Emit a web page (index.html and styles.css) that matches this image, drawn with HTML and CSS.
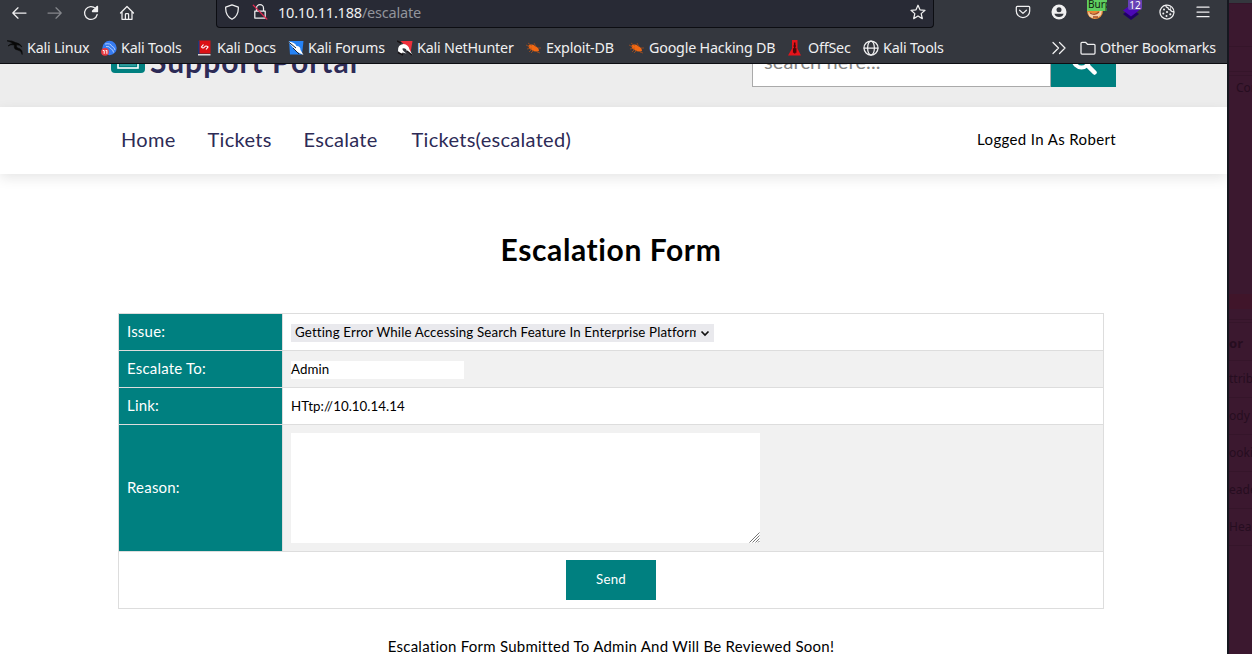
FILE: index.html
```html
<!DOCTYPE html>
<html lang="en">
<head>
<meta charset="utf-8">
<title>Support Portal</title>
<link rel="stylesheet" href="styles.css">
</head>
<body>
<div class="screen">
<div class="window">
  <div class="chrome">
    <div class="toolbar">
      <div class="nav-buttons">
        <svg class="ic" viewBox="0 0 16 16"><path d="M15 8H2M7 2.8 1.8 8 7 13.2"/></svg>
        <svg class="ic dim" viewBox="0 0 16 16"><path d="M1 8h13M9 2.8 14.2 8 9 13.2"/></svg>
        <svg class="ic" viewBox="0 0 16 16"><path d="M14.2 9.5A6.4 6.4 0 1 1 12.5 3.500M14.3 1.5v4.8H9.5z"/><path class="solid" d="M14.5 1.5v5h-5z"/></svg>
        <svg class="ic" viewBox="0 0 16 16"><path d="M1.5 8 8 1.5 14.5 8M3 7v7.3h10V7M6.4 14.3V9.4q0-.8.8-.8h1.6q.8 0 .8.8v4.9"/></svg>
      </div>
      <div class="urlbar">
        <svg class="ic" viewBox="0 0 16 16"><path d="M8 .9 14.3 3.2C14.6 9 12.4 13 8 15.3 3.6 13 1.4 9 1.7 3.2z"/></svg>
        <svg class="ic lock" viewBox="0 0 16 16"><path d="M4.5 7V4.2a3.5 3.5 0 0 1 7 0V7M2.8 7.2h10.4v6.9H2.8z"/><path class="red" d="M1.3 1.2 14.8 15"/></svg>
        <div class="url">10.10.11.188<span class="path">/escalate</span></div>
        <svg class="ic" viewBox="0 0 16 16"><path d="m8 1.2 2 4.6 5 .5-3.8 3.3 1.1 5L8 12l-4.3 2.6 1.1-5L1 6.3l5-.5z"/></svg>
      </div>
      <div class="tools">
        <svg class="ic" viewBox="0 0 16 16"><path d="M2.3 2.4h11.4q1 0 1 1v3.5a6.7 6.7 0 0 1-13.4 0V3.4q0-1 1-1zM4.6 6.2 8 9.4l3.4-3.2"/></svg>
        <svg class="ic" viewBox="0 0 16 16"><circle class="disc" cx="8" cy="8" r="7.5"/><circle class="hole" cx="8" cy="5.7" r="2.5"/><path class="hole" d="M3.4 9.7h9.2Q11.6 13 8 13T3.4 9.7z"/></svg>
        <div class="ext">
          <svg viewBox="0 0 18 18"><circle cx="9" cy="9" r="8" fill="#e98a35"/><path d="M2 10q7 4 14-2l-1 5q-6 6-12 1z" fill="#f3cfaa"/><path d="M4 11q5 3 9-1M7 15h5" stroke="#a44b24" stroke-width="1.3" fill="none"/></svg>
          <span class="badge burp">Burp</span>
        </div>
        <div class="ext">
          <svg viewBox="0 0 18 18"><path d="m1 12 8-6 8 6-8 6z" fill="#210066"/><path d="m1 8.5 8-6 8 6-8 6z" fill="#4b08b5"/></svg>
          <span class="badge count">12</span>
        </div>
        <svg class="ic" viewBox="0 0 16 16"><path d="M7 1.100A7 7 0 1 0 14.900 9M7 1.100A7 7 0 0 1 14.900 9M7 1.100q-.4 2.400 2 2.600.2 2.200 2.400 2 .5 2.300 3.500 2.300"/><g class="disc"><circle cx="5" cy="5.400" r="1"/><circle cx="8" cy="8" r="1.100"/><circle cx="4.300" cy="9.400" r="1"/><circle cx="7.500" cy="12" r="1"/><circle cx="11.300" cy="10.300" r="1.100"/><circle cx="11.500" cy="4" r=".7"/></g></svg>
        <svg class="ic" viewBox="0 0 16 16"><path d="M2 3.2h12M2 8h12M2 12.7h12"/></svg>
      </div>
    </div>
    <div class="bookmarks">
      <div class="bm"><svg viewBox="0 0 16 16"><path d="M0 .8q5-.6 8.500 1.700Q13 3 15 7q-2.500-2.500-5.500-2.200-.8 2.800 2 3.500 4.200.8 3.700 6.200-.9-4.200-4.500-4.500-4.500-.7-3.200-5Q4 4 1 6q2-2.500 5-2.500Q3 1.500 0 .8z" fill="#080808" stroke="#080808" stroke-width=".6"/></svg><span>Kali Linux</span></div>
      <div class="bm"><svg viewBox="0 0 16 16"><circle cx="8.500" cy="8" r="7.200" fill="#367bf0"/><path d="M4 4q6-1 6.500 2 3 1 3.500 4M5 6.500q4-.5 4.500 2 3 1 3 4" stroke="#bcd5ff" stroke-width=".9" fill="none"/><circle cx="4" cy="11.800" r="3.900" fill="#e83a42"/><path d="M1.800 10.500h1.400v3.300M5.900 10.300v3.500M4.600 10.600h1.300" stroke="#fff" fill="none"/></svg><span>Kali Tools</span></div>
      <div class="bm"><svg viewBox="0 0 16 16"><path d="M2 .5h11.500v13H2z" fill="#dc1114"/><path d="M1 1h1.500v13H1z" fill="#1d3978"/><path d="M1 14h12.500v1.500H1z" fill="#d8d8d8"/><path d="M6.500 4.500 4.500 7q1.500 2 3 0t3.500 0L9 9.500" stroke="#fff" stroke-width="1.200" fill="none"/></svg><span>Kali Docs</span></div>
      <div class="bm"><svg viewBox="0 0 16 16"><path d="M1 1h14.500L14 14.500H2z" fill="#2683f5"/><path d="M0 1.500q7 .5 8.500 4.500 4 0 4 4l3 5-7-3.500L4.500 7z" fill="#fff"/><path d="M0 1.500 8 8M5 8l6 6" stroke="#182435" fill="none"/></svg><span>Kali Forums</span></div>
      <div class="bm"><svg viewBox="0 0 16 16"><path d="M3.500 1h12l-2 12-4-6z" fill="#ee303b"/><path d="M1 11Q.5 4.500 6.500 4q5 .5 6 5.500l3 5.500-5.500-3.500q-1-4-4.500-3-.5 2 4 5l-4-1-1.500 2z" fill="#fff"/><path d="M0 1 4 3M1 12.500l5 2.500M10 11l5 4" stroke="#171214" stroke-width="1.400" fill="none"/></svg><span>Kali NetHunter</span></div>
      <div class="bm"><svg viewBox="0 0 16 16"><path d="M2.500 5.500q3.500-2 6.500.5 4 1.500 4 5-4 1.500-7.500-1-3-1.500-3-4.500z" fill="#f26812"/><path d="m0 5 4 2M1 9l5-1M5 13l3-3M8 3l2 4M11 12l3 1M12 8h3M2 3l4 3M3 12l3-3" stroke="#b65118" stroke-width=".7" fill="none"/></svg><span>Exploit-DB</span></div>
      <div class="bm"><svg viewBox="0 0 16 16"><path d="M2.500 5.500q3.500-2 6.500.5 4 1.500 4 5-4 1.500-7.500-1-3-1.500-3-4.500z" fill="#f26812"/><path d="m0 5 4 2M1 9l5-1M5 13l3-3M8 3l2 4M11 12l3 1M12 8h3M2 3l4 3M3 12l3-3" stroke="#b65118" stroke-width=".7" fill="none"/></svg><span>Google Hacking DB</span></div>
      <div class="bm"><svg viewBox="0 0 16 16"><path d="M4 0h5.500v8.500l3.500 7H0l4-7z" fill="#e5141b"/><path d="M6.700 2.500v11M5.500 6h2.400M5.700 9h2v3h-2z" stroke="#4d0508" stroke-width="1.500"/></svg><span>OffSec</span></div>
      <div class="bm"><svg class="ic" viewBox="0 0 16 16"><circle cx="8" cy="8" r="7"/><ellipse cx="8" cy="8" rx="3.400" ry="7"/><path d="M1 8h14"/></svg><span>Kali Tools</span></div>
      <div class="more"><svg class="ic" viewBox="0 0 16 16"><path d="m2 2.500 5.500 5.500L2 13.500M8.500 2.500 14 8l-5.500 5.500"/></svg></div>
      <div class="bm"><svg class="ic" viewBox="0 0 16 16"><path d="M1 13V3.300q0-1 1-1h3.500l2 2H14q1 0 1 1V13q0 1-1 1H2q-1 0-1-1z"/></svg><span>Other Bookmarks</span></div>
    </div>
  </div>
  <div class="page">
    <header class="masthead">
      <div class="brand"><svg viewBox="0 0 34 28"><rect width="34" height="28" rx="4" fill="#008080"/><rect x="7" y="5" width="20" height="18" fill="none" stroke="#fff" stroke-width="1.600"/><path d="M9 20h16" stroke="#2c9999" stroke-width="2"/></svg><span>Support Portal</span></div>
      <div class="search"><div class="field">search here...</div><div class="go"><svg viewBox="0 0 26 26"><circle cx="10.500" cy="10.500" r="8" fill="none" stroke="#fff" stroke-width="4"/><path d="m16.500 16.500 7 7" stroke="#fff" stroke-width="4.500" stroke-linecap="round"/></svg></div></div>
    </header>
    <nav class="menu">
      <a class="m1">Home</a><a class="m2">Tickets</a><a class="m3">Escalate</a><a class="m4">Tickets(escalated)</a>
      <span class="user">Logged In As Robert</span>
    </nav>
    <main>
      <h1>Escalation Form</h1>
      <div class="form">
        <div class="row"><div class="label">Issue:</div><div class="cell"><div class="select"><span>Getting Error While Accessing Search Feature In Enterprise Platform</span><svg viewBox="0 0 10 10"><path d="m1.500 3.500 3.500 3.500 3.500-3.500" fill="none" stroke="#111" stroke-width="1.700"/></svg></div></div></div>
        <div class="row alt"><div class="label">Escalate To:</div><div class="cell"><div class="input">Admin</div></div></div>
        <div class="row"><div class="label">Link:</div><div class="cell"><div class="input">HTtp://10.10.14.14</div></div></div>
        <div class="row alt tall"><div class="label">Reason:</div><div class="cell"><div class="area"><svg viewBox="0 0 11 11"><path d="M.500 10.500l10-10M3.500 10.500l7-7M6.500 10.500l4-4M9 10.500l1.500-1.500" stroke="#777" fill="none"/></svg></div></div></div>
        <div class="row send"><div class="button">Send</div></div>
      </div>
      <p class="notice">Escalation Form Submitted To Admin And Will Be Reviewed Soon!</p>
    </main>
  </div>
</div>
<aside class="behind">
  <div class="strip top"></div><div class="strip s1"></div><div class="strip s2"></div><div class="strip s3"></div><div class="strip console">Con</div><div class="strip hot"></div>
  <div class="strip s4"></div><div class="strip s5"></div><div class="strip head">or</div><div class="strip item">ttribu</div><div class="strip item">ody P</div><div class="strip item">ookie</div><div class="strip item">eade</div><div class="strip item">Head</div>
</aside>
</div>
</body>
</html>
```
FILE: styles.css
```css
* { box-sizing: border-box; }
body { margin: 0; background: #3b182f; }
.screen { display: flex; width: 1252px; height: 654px; overflow: hidden; }
.window { width: 1229px; flex: none; border-right: 2px solid #15171f; background: #fff; display: flex; flex-direction: column; overflow: hidden; }
.chrome { height: 64px; flex: none; background: #34373e; border-bottom: 1px solid #0c0d12; font-family: "Noto Sans", sans-serif; color: #f0f0f1; }
.toolbar { height: 28px; display: flex; overflow: hidden; }
.ic { width: 16px; height: 16px; flex: none; fill: none; stroke: #f0f0f1; stroke-width: 1.25; stroke-linejoin: round; stroke-linecap: round; }
.dim { stroke: #85878c; }
.solid, .disc { fill: #f0f0f1; }
.disc { stroke: none; }
.hole { fill: #34373e; stroke: none; }
.red { stroke: #e22850; }
.nav-buttons { width: 216px; display: flex; gap: 20px; padding: 5px 0 0 11px; }
.urlbar { width: 718px; height: 28px; display: flex; padding: 4px 7px 0; background: #282a35; border: 1px solid #0c0d12; border-top: 0; border-radius: 0 0 4px 4px; }
.lock { margin-left: 12px; }
.url { flex: 1; margin-left: 10px; font-size: 14.5px; letter-spacing: -.2px; line-height: 17px; white-space: nowrap; }
.path { color: #92949b; }
.tools { display: flex; gap: 20px; padding: 4px 0 0 81px; }
.ext { position: relative; width: 16px; height: 16px; }
.ext svg { display: block; width: 18px; height: 18px; margin: -2px 0 0 -1px; }
.badge { position: absolute; overflow: hidden; font-size: 10px; line-height: 12px; height: 13px; white-space: nowrap; }
.burp { left: -4px; margin-left: 4px; top: -6px; width: 20px; padding: 0 1px; background: #5fce60; color: #102010; }
.count { left: 5px; top: -5px; width: 14px; text-align: center; background: #6742b5; color: #fff; border-radius: 2px; height: 11px; }
.bookmarks { height: 35px; display: grid; grid-template-columns: 94px 96px 91px 109px 129px 103px 159px 75px 188px 29px 140px; align-items: center; padding: 5px 0 0 7px; font-size: 14.3px; letter-spacing: -.2px; line-height: 18px; }
.bm { display: flex; align-items: center; gap: 4px; white-space: nowrap; }
.bm svg { width: 16px; height: 16px; flex: none; }
.more { display: flex; }
.page { flex: 1; min-height: 0; overflow: hidden; display: flex; flex-direction: column; font-family: Lato, sans-serif; font-variant-ligatures: none; color: #000; }
.masthead { height: 43px; flex: none; background: #ededed; overflow: hidden; display: flex; justify-content: space-between; align-items: flex-end; padding: 0 111px 20px; }
.brand { display: flex; align-items: flex-end; gap: 5px; height: 48px; padding-bottom: 14px; color: #2d2b56; font-size: 30px; font-weight: 700; line-height: 34px; }
.brand svg { width: 34px; height: 28px; }
.brand span { margin-bottom: -5px; letter-spacing: 1px; }
.search { display: flex; height: 50px; width: 364px; }
.field { width: 299px; background: #fff; border: 1px solid #aaa; padding-left: 11px; font-size: 20px; line-height: 47px; color: #858585; letter-spacing: .1px; }
.go { width: 65px; background: #008080; display: flex; justify-content: center; align-items: center; }
.go svg { width: 26px; height: 26px; }
.menu { position: relative; height: 67px; flex: none; display: flex; align-items: center; padding: 0 111px 3px 121px; color: #2d2b56; font-size: 20px; background: #fff; box-shadow: 0 4px 12px rgba(0,0,0,.1); }
.m1 { width: 86.5px; } .m2 { width: 96px; } .m3 { width: 108px; }
.menu a { letter-spacing: .3px; }
.user { margin-left: auto; font-size: 15px; color: #000; letter-spacing: .36px; }
main { padding-left: 118px; width: 1104px; }
h1 { margin: 56px 0 45px; height: 38px; line-height: 38px; font-size: 30px; text-align: center; font-weight: 700; letter-spacing: .6px; }
.form { width: 986px; border: 1px solid #ddd; border-bottom: 0; }
.row { display: flex; height: 37px; border-bottom: 1px solid #ddd; }
.alt { background: #f1f1f1; }
.label { width: 164px; flex: none; background: #008080; border-right: 1px solid #ddd; color: #fff; font-size: 15px; display: flex; align-items: center; padding: 0 0 2px 8px; letter-spacing: .2px; }
.cell { padding: 8px; display: flex; align-items: center; }
.select { width: 423px; height: 18px; margin-top: 2px; background: #e9e9ed; display: flex; align-items: center; padding-left: 4px; font-size: 13.3px; }
.select span { width: 401px; overflow: hidden; white-space: nowrap; line-height: 16px; padding-bottom: 2px; letter-spacing: .15px; }
.select svg { width: 10px; height: 10px; margin-left: 4px; }
.input { width: 173px; height: 18px; margin-top: 1px; background: #fff; font-size: 13.3px; line-height: 16px; letter-spacing: .05px; }
.tall { height: 127px; }
.area { width: 469px; height: 110px; background: #fff; display: flex; align-items: flex-end; justify-content: flex-end; }
.area svg { width: 11px; height: 11px; }
.send { height: 57px; justify-content: center; align-items: center; }
.button { width: 90px; height: 40px; background: #008080; color: #fff; font-size: 13.3px; line-height: 38px; text-align: center; letter-spacing: .2px; }
.notice { margin: 27px 0 0; font-size: 15px; line-height: 20px; text-align: center; white-space: nowrap; letter-spacing: .25px; }
.behind { flex: 1; overflow: hidden; background: #3b182f; color: #260d20; font: 12px/18px "Noto Sans", sans-serif; }
.strip { border-bottom: 1px solid #35152a; white-space: nowrap; }
.top { height: 4px; background: #34373e; }
.s1 { height: 43px; }
.s2 { height: 25px; }
.s3 { height: 4px; }
.console { height: 218px; padding: 3px 0 0 7px; border-bottom: 0; }
.hot { height: 15px; background: #40152a; border-bottom: 0; }
.s4 { height: 11px; }
.s5 { height: 3px; }
.head { height: 38px; padding-top: 11px; font-size: 13px; font-weight: 700; }
.item { height: 37px; padding-top: 9px; }
```
